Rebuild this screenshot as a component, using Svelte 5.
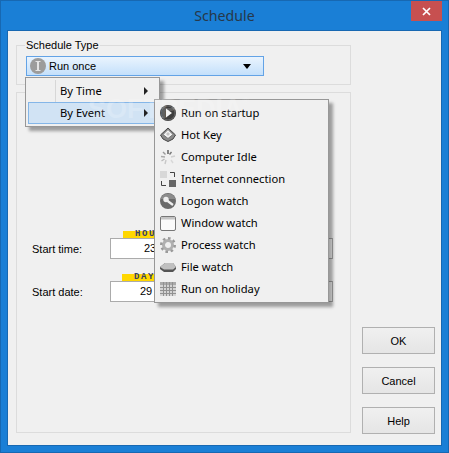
<script>
	const menuItems = ['Run on startup', 'Hot Key', 'Computer Idle', 'Internet connection', 'Logon watch', 'Window watch', 'Process watch', 'File watch', 'Run on holiday'];
</script>

<div class="window">
	<header class="titlebar">
		<span class="title">Schedule</span>
		<button class="close" type="button" aria-label="Close">
			<svg width="9" height="9" viewBox="0 0 9 9"><path d="M1 1l7 7M8 1L1 8" stroke="#fff" stroke-width="1.7" /></svg>
		</button>
	</header>

	<div class="client">
		<div class="left">
			<fieldset class="group type">
				<legend>Schedule Type</legend>
				<div class="combo">
					<svg width="16" height="16" viewBox="0 0 16 16">
						<circle cx="8" cy="8" r="8" fill="#9c9c9c" />
						<rect x="5.500" y="3" width="5" height="1" fill="#e4e4e4" />
						<rect x="7" y="3" width="2" height="10" fill="#e4e4e4" />
						<rect x="5.500" y="12" width="5" height="1" fill="#e4e4e4" />
					</svg>
					<span>Run once</span>
					<i class="arrow-down"></i>
				</div>
			</fieldset>

			<div class="group details">
				<div class="field">
					<span class="label">Start time:</span>
					<div class="stack">
						<div class="cap hour">HOUR</div>
						<div class="input hour-input"><span>23</span></div>
					</div>
				</div>
				<div class="field">
					<span class="label">Start date:</span>
					<div class="stack">
						<div class="cap day">DAY</div>
						<div class="input day-input"><span>29</span></div>
					</div>
				</div>
			</div>
		</div>

		<div class="buttons">
			<button type="button">OK</button>
			<button type="button">Cancel</button>
			<button type="button">Help</button>
		</div>
	</div>

	<div class="menu">
		<div class="menu-row">By Time<i class="arrow-right"></i></div>
		<div class="menu-row hot">By Event<i class="arrow-right"></i></div>
	</div>

	<div class="submenu">
		{#each menuItems as item, i}
			<div class="sub-row">
				<svg width="16" height="16" viewBox="0 0 16 16">
					{#if i === 0}
						<circle cx="8" cy="8" r="8" fill="#3d3d3d" />
						<circle cx="8" cy="8" r="7" fill="none" stroke="#666" />
						<path d="M6 3.500l6 4.500-6 4.500z" fill="#f4f4f4" />
					{:else if i === 1}
						<path d="M8 1l7.500 7-2.500 4-5 2.500-5-2.500-2.500-4z" fill="#8a8a8a" stroke="#444" />
						<path d="M8 2.500l5 5-5 4-5-4z" fill="#f2f2f2" stroke="#777" />
						<path d="M8 5l2 2-2 2-2-2z" fill="#c4c4c4" />
					{:else if i === 2}
						<path d="M8 1v4" stroke="#555" stroke-width="1.400" />
						<path d="M11.500 3l-2 2.500" stroke="#777" stroke-width="1.400" />
						<path d="M15 7l-4 1" stroke="#d0d0d0" stroke-width="1.400" />
						<path d="M11 11l2 3" stroke="#d8d8d8" stroke-width="1.400" />
						<path d="M6 11l-1 4" stroke="#c8c8c8" stroke-width="1.400" />
						<path d="M4.500 10l-3 2" stroke="#bbb" stroke-width="1.400" />
						<path d="M1 7.500l4 .5" stroke="#aaa" stroke-width="1.400" />
						<path d="M3 3l2.500 2.500" stroke="#999" stroke-width="1.400" />
					{:else if i === 3}
						<rect x="0" y="0" width="7" height="7" fill="#d8d8d8" />
						<rect x="9" y="9" width="7" height="7" fill="#666" />
						<path d="M10 1.500h4.500V6M1.500 10v4.500H6" fill="none" stroke="#444" />
					{:else if i === 4}
						<circle cx="8" cy="8" r="8" fill="#6a6a6a" />
						<path d="M0.500 6a8 8 0 0 1 15 0z" fill="#8c8c8c" />
						<circle cx="6" cy="6.500" r="2.700" fill="#eee" />
						<path d="M7 7.500l6 4.500" stroke="#eee" stroke-width="2.200" />
					{:else if i === 5}
						<rect x="0.500" y="1.500" width="15" height="14" rx="1.500" fill="#fafafa" stroke="#777" />
						<rect x="1" y="2" width="14" height="2.500" fill="#c4c4c4" />
					{:else if i === 6}
						<circle cx="8" cy="8" r="4.500" fill="none" stroke="#b0b0b0" stroke-width="3" />
						<circle cx="8" cy="8" r="6.800" fill="none" stroke="#9a9a9a" stroke-width="2.400" stroke-dasharray="2.600 2.700" />
					{:else if i === 7}
						<path d="M0 8l5-4h8l3 4v2l-3 3H4l-4-3z" fill="#555" />
						<path d="M0 8l5-4h8l3 4-3 2.500H4z" fill="#c0c0c0" />
					{:else}
						<rect x="0" y="1" width="16" height="14" fill="#d4d4d4" />
						<rect x="0" y="1" width="16" height="3" fill="#aaa" />
						<path d="M3.500 1v14M6.500 1v14M9.500 1v14M12.500 1v14M0 6.500h16M0 9.500h16M0 12.500h16" stroke="#919191" />
					{/if}
				</svg>
				<span>{item}</span>
			</div>
		{/each}
	</div>

	<div class="watermark" aria-hidden="true">SOFTPEDIA<sup>®</sup></div>
</div>

<style>
	:global(body) {
		margin: 0;
	}

	.window {
		position: relative;
		box-sizing: border-box;
		width: 449px;
		height: 453px;
		display: flex;
		flex-direction: column;
		background: #1a7fd6;
		border: 1px solid #1768b2;
		font-family: 'Liberation Sans', Arial, sans-serif;
		font-size: 11px;
		color: #000;
		overflow: hidden;
	}

	.titlebar {
		position: relative;
		height: 29px;
		flex: none;
		display: flex;
		justify-content: center;
		align-items: center;
	}

	.title {
		font-family: 'Noto Sans', sans-serif;
		font-size: 14.200px;
		color: #26384a;
	}

	.close {
		position: absolute;
		top: 0;
		right: 6px;
		width: 31px;
		height: 20px;
		padding: 0;
		border: 0;
		background: #c75050;
		display: grid;
		place-items: center;
	}

	.client {
		flex: 1;
		margin: 1px 7px 7px;
		padding: 7px 6px 11px 8px;
		display: flex;
		gap: 11px;
		background: #f0f0f0;
		outline: 1px solid #1768b2;
	}

	.left {
		flex: none;
		width: 335px;
		display: flex;
		flex-direction: column;
		gap: 7px;
	}

	.group {
		margin: 0;
		box-sizing: border-box;
		border: 1px solid #dcdcdc;
	}

	.type {
		height: 47px;
		padding: 0 0 0 8px;
	}

	legend {
		padding: 0 1px;
		line-height: 14px;
		font-size: 11px;
	}

	.combo {
		position: relative;
		width: 238px;
		height: 20px;
		margin: 4px 0 0 1px;
		display: flex;
		align-items: center;
		gap: 3px;
		padding-left: 3px;
		box-sizing: border-box;
		border: 1px solid #63a3e6;
		background: linear-gradient(#eaf4fe, #c4e0fb);
	}

	.arrow-down {
		position: absolute;
		right: 12px;
		top: 7px;
		border: 4px solid transparent;
		border-top: 5px solid #000;
		border-bottom: 0;
	}

	.details {
		flex: 1;
		margin-bottom: 1px;
		padding: 138px 0 0 15px;
		display: flex;
		flex-direction: column;
		gap: 15px;
	}

	.field {
		display: flex;
		align-items: flex-end;
	}

	.label {
		width: 78px;
		line-height: 19px;
	}

	.stack {
		width: 223px;
		display: flex;
		flex-direction: column;
	}

	.cap {
		width: 64px;
		height: 7px;
		padding-left: 12px;
		box-sizing: border-box;
		background: #ffd700;
		font: bold 9px 'Liberation Mono', monospace;
		letter-spacing: 1.600px;
		line-height: 7px;
		color: #34406a;
	}

	.hour {
		margin-left: 13px;
	}

	.day {
		margin-left: 12px;
	}

	.input {
		box-sizing: border-box;
		height: 21px;
		border: 1px solid #ababab;
		background: #fff;
		line-height: 19px;
		font-size: 11px;
	}

	.hour-input {
		padding-left: 33px;
	}

	.day-input {
		padding-left: 29px;
	}

	.buttons {
		flex: none;
		width: 73px;
		display: flex;
		flex-direction: column;
		justify-content: flex-end;
		gap: 13px;
	}

	.buttons button {
		height: 27px;
		padding: 0;
		font: 11px 'Liberation Sans', Arial, sans-serif;
		border: 1px solid #b0b0b0;
		background: linear-gradient(#f0f0f0, #e5e5e5);
		color: #000;
	}

	.menu {
		position: absolute;
		left: 24px;
		top: 76px;
		width: 135px;
		box-sizing: border-box;
		padding: 2px;
		background: #f0f0f0;
		border: 1px solid #979797;
		box-shadow: 4px 4px 3px rgba(0, 0, 0, 0.35);
		font-family: 'Noto Sans', sans-serif;
		font-size: 11.200px;
	}

	.menu::before {
		content: '';
		position: absolute;
		left: 29px;
		top: 2px;
		bottom: 2px;
		width: 1px;
		background: #d7d7d7;
	}

	.menu-row {
		position: relative;
		height: 22px;
		line-height: 19px;
		padding-left: 31px;
		border: 1px solid transparent;
		box-sizing: border-box;
	}

	.menu-row.hot {
		background: #d1e3f4;
		border-color: #84b6e8;
	}

	.arrow-right {
		position: absolute;
		right: 4px;
		top: 6px;
		border: 4px solid transparent;
		border-left: 4px solid #222;
	}

	.submenu {
		position: absolute;
		left: 153px;
		top: 98px;
		width: 175px;
		box-sizing: border-box;
		padding: 2px;
		background: #f0f0f0;
		border: 1px solid #979797;
		box-shadow: 4px 4px 3px rgba(0, 0, 0, 0.35);
		font-family: 'Noto Sans', sans-serif;
		font-size: 11.200px;
	}

	.sub-row {
		height: 22px;
		display: flex;
		align-items: center;
		gap: 5px;
		padding-left: 3px;
	}

	.sub-row span {
		margin-top: -2px;
	}

	.watermark {
		position: absolute;
		left: 87px;
		top: 93px;
		font: bold 27px 'Liberation Sans', Arial, sans-serif;
		color: #fff;
		opacity: 0.18;
		pointer-events: none;
	}

	.watermark sup {
		font-size: 9px;
		font-weight: normal;
		vertical-align: 14px;
	}
</style>
